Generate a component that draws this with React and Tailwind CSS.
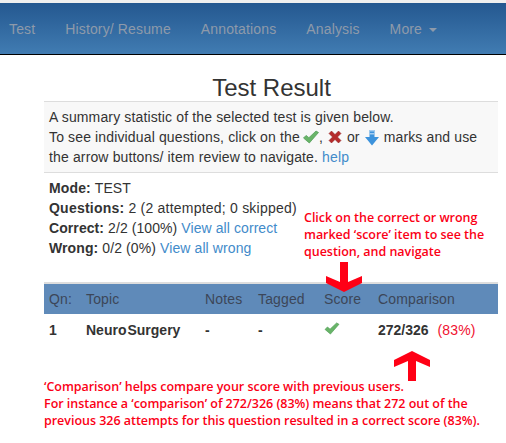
const navItems = ["Test", "History/ Resume", "Annotations", "Analysis"];

function Tick({ className }) {
  return (
    <svg className={className} viewBox="0 0 16 14" aria-hidden="true">
      <path d="M0.500 8l2.600-2.600 2.800 2.300L13 1l2.500 1.500L6.300 13z" fill="#68b468" stroke="#4a9a50" strokeWidth="0.7" />
    </svg>
  );
}

function Cross({ className }) {
  return (
    <svg className={className} viewBox="0 0 14 14" aria-hidden="true">
      <path d="M1 3.500L3.500 1 7 4.500 10.500 1 13 3.500 9.500 7 13 10.500 10.500 13 7 9.500 3.500 13 1 10.500 4.500 7z" fill="#b52a2a" stroke="#8f2020" strokeWidth="0.5" />
    </svg>
  );
}

function DownArrow({ className }) {
  return (
    <svg className={className} viewBox="0 0 14 17" aria-hidden="true">
      <path d="M4.500 1h5v7H14l-7 8.500L0 8h4.500z" fill="#3d93dc" />
      <path d="M4.500 1h5v1.500h-5zM4.500 4h5v1.500h-5z" fill="#a6cdf0" />
    </svg>
  );
}

// dikey ok, kirmizi notlar icin
function RedArrow({ up, className }) {
  return (
    <svg className={className} viewBox="0 0 36 30" aria-hidden="true">
      {up ? (
        <path d="M18 0L36 9v7L22 10v20h-8V10L0 16V9z" fill="#ff0015" />
      ) : (
        <path d="M14 0h8v20l14-6v7L18 30 0 21v-7l14 6z" fill="#ff0015" />
      )}
    </svg>
  );
}

export default function App() {
  return (
    <div className="relative h-[443px] w-[506px] overflow-hidden bg-white font-['Liberation_Sans',Arial,sans-serif] text-[14px] leading-5 tracking-[0.14px] text-[#333]">
      <div className="h-[3px] bg-[#efefef]" />
      <nav className="flex h-[52px] items-center border-b border-black bg-gradient-to-b from-[#245890] to-[#417cb2] text-[#8e9aaa]">
        {navItems.map((item) => (
          <a key={item} className="pl-[9px] pr-[21px]">{item}</a>
        ))}
        <a className="flex items-center gap-[7px] pl-[9px]">
          More
          <span className="mt-[2px] border-x-4 border-t-4 border-x-transparent border-t-[#8e9aaa]" />
        </a>
      </nav>

      <div className="ml-[44px] w-[454px]">
        <h1 className="mt-[21px] mb-[1px] pl-[1px] text-center text-[24px] leading-[24px] tracking-normal text-[#333]">Test Result</h1>
        <div className="h-[72px] border-y border-[#ddd] bg-[#f8f8f8] px-[5px] pt-[5px]">
          <p>A summary statistic of the selected test is given below.</p>
          <p className="flex items-center">
            To see individual questions, click on the
            <Tick className="ml-[3px] h-[14px] w-[16px]" />,
            <Cross className="ml-[5px] h-[14px] w-[14px]" />
            <span className="ml-[5px]">or</span>
            <DownArrow className="ml-[5px] h-[17px] w-[14px]" />
            <span className="ml-[5px]">marks and use</span>
          </p>
          <p>the arrow buttons/ item review to navigate. <a className="text-[#428bca]">help</a></p>
        </div>

        <div className="mt-[5px] px-[5px]">
          <p><b>Mode:</b> TEST</p>
          <p className="tracking-[0.22px]"><b>Questions:</b> 2 (2 attempted; 0 skipped)</p>
          <p className="tracking-[0.08px]"><b>Correct:</b> 2/2 (100%) <a className="text-[#428bca]">View all correct</a></p>
          <p className="tracking-[0.1px]"><b>Wrong:</b> 0/2 (0%) <a className="text-[#428bca]">View all wrong</a></p>
        </div>

        <table className="mt-[24px] w-full border-collapse text-left">
          <thead>
            <tr className="h-[31px] border-t-2 border-[#ddd] bg-[#5f8ab9] text-[#3c4658]">
              <th className="w-[42px] pl-[5px] font-normal">Qn:</th>
              <th className="w-[119px] font-normal">Topic</th>
              <th className="w-[53px] font-normal">Notes</th>
              <th className="w-[66px] font-normal">Tagged</th>
              <th className="w-[54px] font-normal">Score</th>
              <th className="font-normal">Comparison</th>
            </tr>
          </thead>
          <tbody>
            <tr className="h-[31px] font-bold tracking-normal">
              <td className="pl-[5px]">1</td>
              <td>Neuro<span className="ml-[1px]">Surgery</span></td>
              <td>-</td>
              <td>-</td>
              <td><Tick className="-mt-[3px] h-[13px] w-[16px]" /></td>
              <td>272/326 <span className="ml-[5px] font-normal tracking-[0.14px] text-[#f01030]">(83%)</span></td>
            </tr>
          </tbody>
        </table>

        <p className="mt-[33px] font-['Open_Sans',sans-serif] text-[12.500px] leading-[17px] font-semibold tracking-[-0.03px] whitespace-nowrap text-[#fb0016]">
          ‘Comparison’ helps compare your score with previous users.
          <br />
          For instance a ‘comparison’ of 272/326 (83%) means that 272 out of the
          <br />
          previous 326 attempts for this question resulted in a correct score (83%).
        </p>
      </div>

      {/* resim uzerine eklenen notlar */}
      <p className="absolute top-[209px] left-[304px] font-['Open_Sans',sans-serif] text-[12.500px] leading-[17px] font-semibold tracking-[-0.03px] whitespace-nowrap text-[#fb0016]">
        Click on the correct or wrong
        <br />
        marked ‘score’ item to see the
        <br />
        question, and navigate
      </p>
      <RedArrow className="absolute top-[262px] left-[326px] h-[30px] w-[36px]" />
      <RedArrow up className="absolute top-[351px] left-[394px] h-[30px] w-[36px]" />
    </div>
  );
}
